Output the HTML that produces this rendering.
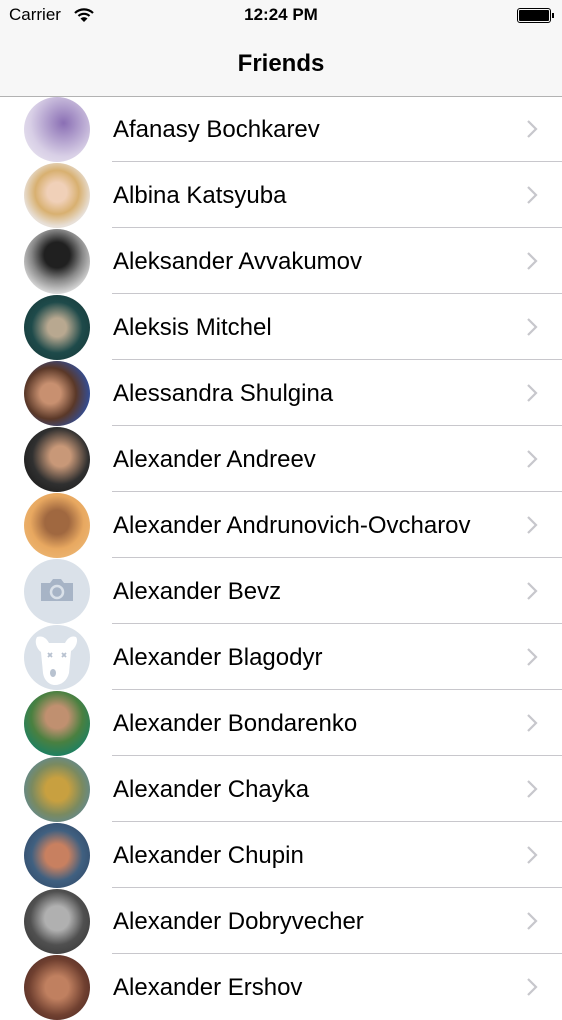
<!DOCTYPE html>
<html><head><meta charset="utf-8"><style>
*{margin:0;padding:0;box-sizing:border-box}
body{width:562px;height:1000px;overflow:hidden;background:#fff;font-family:"Liberation Sans",sans-serif;position:relative}
.bar{position:absolute;left:0;top:0;width:562px;height:97px;background:#f7f7f7;border-bottom:1px solid #b2b2b2}
.st{position:absolute;top:5px;font-size:17px;color:#000}
.title{position:absolute;top:50px;width:100%;text-align:center;font-size:24px;font-weight:bold}
.row{position:absolute;left:0;width:562px;height:66px}
.av{position:absolute;left:24px;top:1px;width:66px;height:65px;border-radius:50%;overflow:hidden}
.nm{position:absolute;left:113px;top:20px;font-size:24px;color:#000;white-space:nowrap}
.sep{position:absolute;left:112px;right:0;bottom:0;height:1px;background:#c8c7cc}
.chev{position:absolute;left:525px;top:23px}
</style></head><body>
<div class="bar">
<div class="st" style="left:9px">Carrier</div>
<svg style="position:absolute;left:74px;top:8px" width="20" height="14" viewBox="0 0 20 14"><path d="M1 5 A13 13 0 0 1 19 5" stroke="#000" stroke-width="2.2" fill="none"/><path d="M4.5 8 A8 8 0 0 1 15.5 8" stroke="#000" stroke-width="2.2" fill="none"/><path d="M10 14 L6.5 10.5 A5 5 0 0 1 13.5 10.5Z" fill="#000"/></svg>
<div class="st" style="left:0;width:100%;text-align:center;font-weight:bold">12:24 PM</div>
<div style="position:absolute;left:517px;top:8px;width:34px;height:15px;border:1px solid #000;border-radius:3px;padding:1px"><div style="width:100%;height:100%;background:#000;border-radius:1px"></div></div>
<div style="position:absolute;left:552px;top:13px;width:2px;height:5px;background:#000"></div>
<div class="title">Friends</div>
</div>

<div class="row" style="top:96px"><div class="av" style="background:radial-gradient(circle at 60% 40%,#8a6fb4,#d8cfe6 60%,#f0eef4)"></div><div class="nm">Afanasy Bochkarev</div><svg class="chev" width="14" height="20"><path d="M3 2l8 8-8 8" stroke="#c7c7cc" stroke-width="2.2" fill="none"/></svg><div class="sep"></div></div>
<div class="row" style="top:162px"><div class="av" style="background:radial-gradient(circle at 50% 45%,#f0d0b8 20%,#d8b070 45%,#e8e0d8 70%)"></div><div class="nm">Albina Katsyuba</div><svg class="chev" width="14" height="20"><path d="M3 2l8 8-8 8" stroke="#c7c7cc" stroke-width="2.2" fill="none"/></svg><div class="sep"></div></div>
<div class="row" style="top:228px"><div class="av" style="background:radial-gradient(circle at 50% 40%,#202020 25%,#888 50%,#d8d8d8 75%)"></div><div class="nm">Aleksander Avvakumov</div><svg class="chev" width="14" height="20"><path d="M3 2l8 8-8 8" stroke="#c7c7cc" stroke-width="2.2" fill="none"/></svg><div class="sep"></div></div>
<div class="row" style="top:294px"><div class="av" style="background:radial-gradient(circle at 50% 50%,#b8a890 20%,#1e4a4a 55%,#143434)"></div><div class="nm">Aleksis Mitchel</div><svg class="chev" width="14" height="20"><path d="M3 2l8 8-8 8" stroke="#c7c7cc" stroke-width="2.2" fill="none"/></svg><div class="sep"></div></div>
<div class="row" style="top:360px"><div class="av" style="background:radial-gradient(circle at 40% 50%,#c89070 20%,#5a3828 50%,#3050a0 80%)"></div><div class="nm">Alessandra Shulgina</div><svg class="chev" width="14" height="20"><path d="M3 2l8 8-8 8" stroke="#c7c7cc" stroke-width="2.2" fill="none"/></svg><div class="sep"></div></div>
<div class="row" style="top:426px"><div class="av" style="background:radial-gradient(circle at 55% 45%,#c89878 20%,#303030 55%,#101010)"></div><div class="nm">Alexander Andreev</div><svg class="chev" width="14" height="20"><path d="M3 2l8 8-8 8" stroke="#c7c7cc" stroke-width="2.2" fill="none"/></svg><div class="sep"></div></div>
<div class="row" style="top:492px"><div class="av" style="background:radial-gradient(circle at 50% 45%,#a06840 25%,#e8a860 55%,#f0c080)"></div><div class="nm">Alexander Andrunovich-Ovcharov</div><svg class="chev" width="14" height="20"><path d="M3 2l8 8-8 8" stroke="#c7c7cc" stroke-width="2.2" fill="none"/></svg><div class="sep"></div></div>
<div class="row" style="top:558px"><div class="av" style="background:#dae1e9"><svg width="66" height="65" viewBox="0 0 66 65"><path d="M17 24h9l3-4h8l3 4h9v18H17z" fill="#a7b4c6"/><circle cx="33" cy="33" r="6" fill="none" stroke="#dae1e9" stroke-width="2.5"/></svg></div><div class="nm">Alexander Bevz</div><svg class="chev" width="14" height="20"><path d="M3 2l8 8-8 8" stroke="#c7c7cc" stroke-width="2.2" fill="none"/></svg><div class="sep"></div></div>
<div class="row" style="top:624px"><div class="av" style="background:#dae1e9"><svg width="66" height="65" viewBox="0 0 66 65"><path d="M13 12c6-2 10 2 12 6h16c2-4 6-8 11-6 3 4-1 12-5 14l-2 22c-2 8-8 12-14 12s-11-5-12-12l-2-21c-4-3-7-10-4-15z" fill="#fff"/><g stroke="#b8c2d0" stroke-width="1.8"><path d="M24 28l4 4M28 28l-4 4M38 28l4 4M42 28l-4 4"/></g><ellipse cx="29" cy="48" rx="3" ry="4" fill="#b8c2d0"/></svg></div><div class="nm">Alexander Blagodyr</div><svg class="chev" width="14" height="20"><path d="M3 2l8 8-8 8" stroke="#c7c7cc" stroke-width="2.2" fill="none"/></svg><div class="sep"></div></div>
<div class="row" style="top:690px"><div class="av" style="background:radial-gradient(circle at 50% 40%,#c09070 22%,#4a8040 50%,#208060 75%)"></div><div class="nm">Alexander Bondarenko</div><svg class="chev" width="14" height="20"><path d="M3 2l8 8-8 8" stroke="#c7c7cc" stroke-width="2.2" fill="none"/></svg><div class="sep"></div></div>
<div class="row" style="top:756px"><div class="av" style="background:radial-gradient(circle at 50% 50%,#c8a040 25%,#7a8a60 55%,#4a88c0)"></div><div class="nm">Alexander Chayka</div><svg class="chev" width="14" height="20"><path d="M3 2l8 8-8 8" stroke="#c7c7cc" stroke-width="2.2" fill="none"/></svg><div class="sep"></div></div>
<div class="row" style="top:822px"><div class="av" style="background:radial-gradient(circle at 50% 50%,#c88060 25%,#406080 55%,#2a4060)"></div><div class="nm">Alexander Chupin</div><svg class="chev" width="14" height="20"><path d="M3 2l8 8-8 8" stroke="#c7c7cc" stroke-width="2.2" fill="none"/></svg><div class="sep"></div></div>
<div class="row" style="top:888px"><div class="av" style="background:radial-gradient(circle at 50% 45%,#b0b0b0 25%,#505050 55%,#303030)"></div><div class="nm">Alexander Dobryvecher</div><svg class="chev" width="14" height="20"><path d="M3 2l8 8-8 8" stroke="#c7c7cc" stroke-width="2.2" fill="none"/></svg><div class="sep"></div></div>
<div class="row" style="top:954px"><div class="av" style="background:radial-gradient(circle at 50% 50%,#c08060 25%,#704030 60%,#402020)"></div><div class="nm">Alexander Ershov</div><svg class="chev" width="14" height="20"><path d="M3 2l8 8-8 8" stroke="#c7c7cc" stroke-width="2.2" fill="none"/></svg></div>
</body></html>
